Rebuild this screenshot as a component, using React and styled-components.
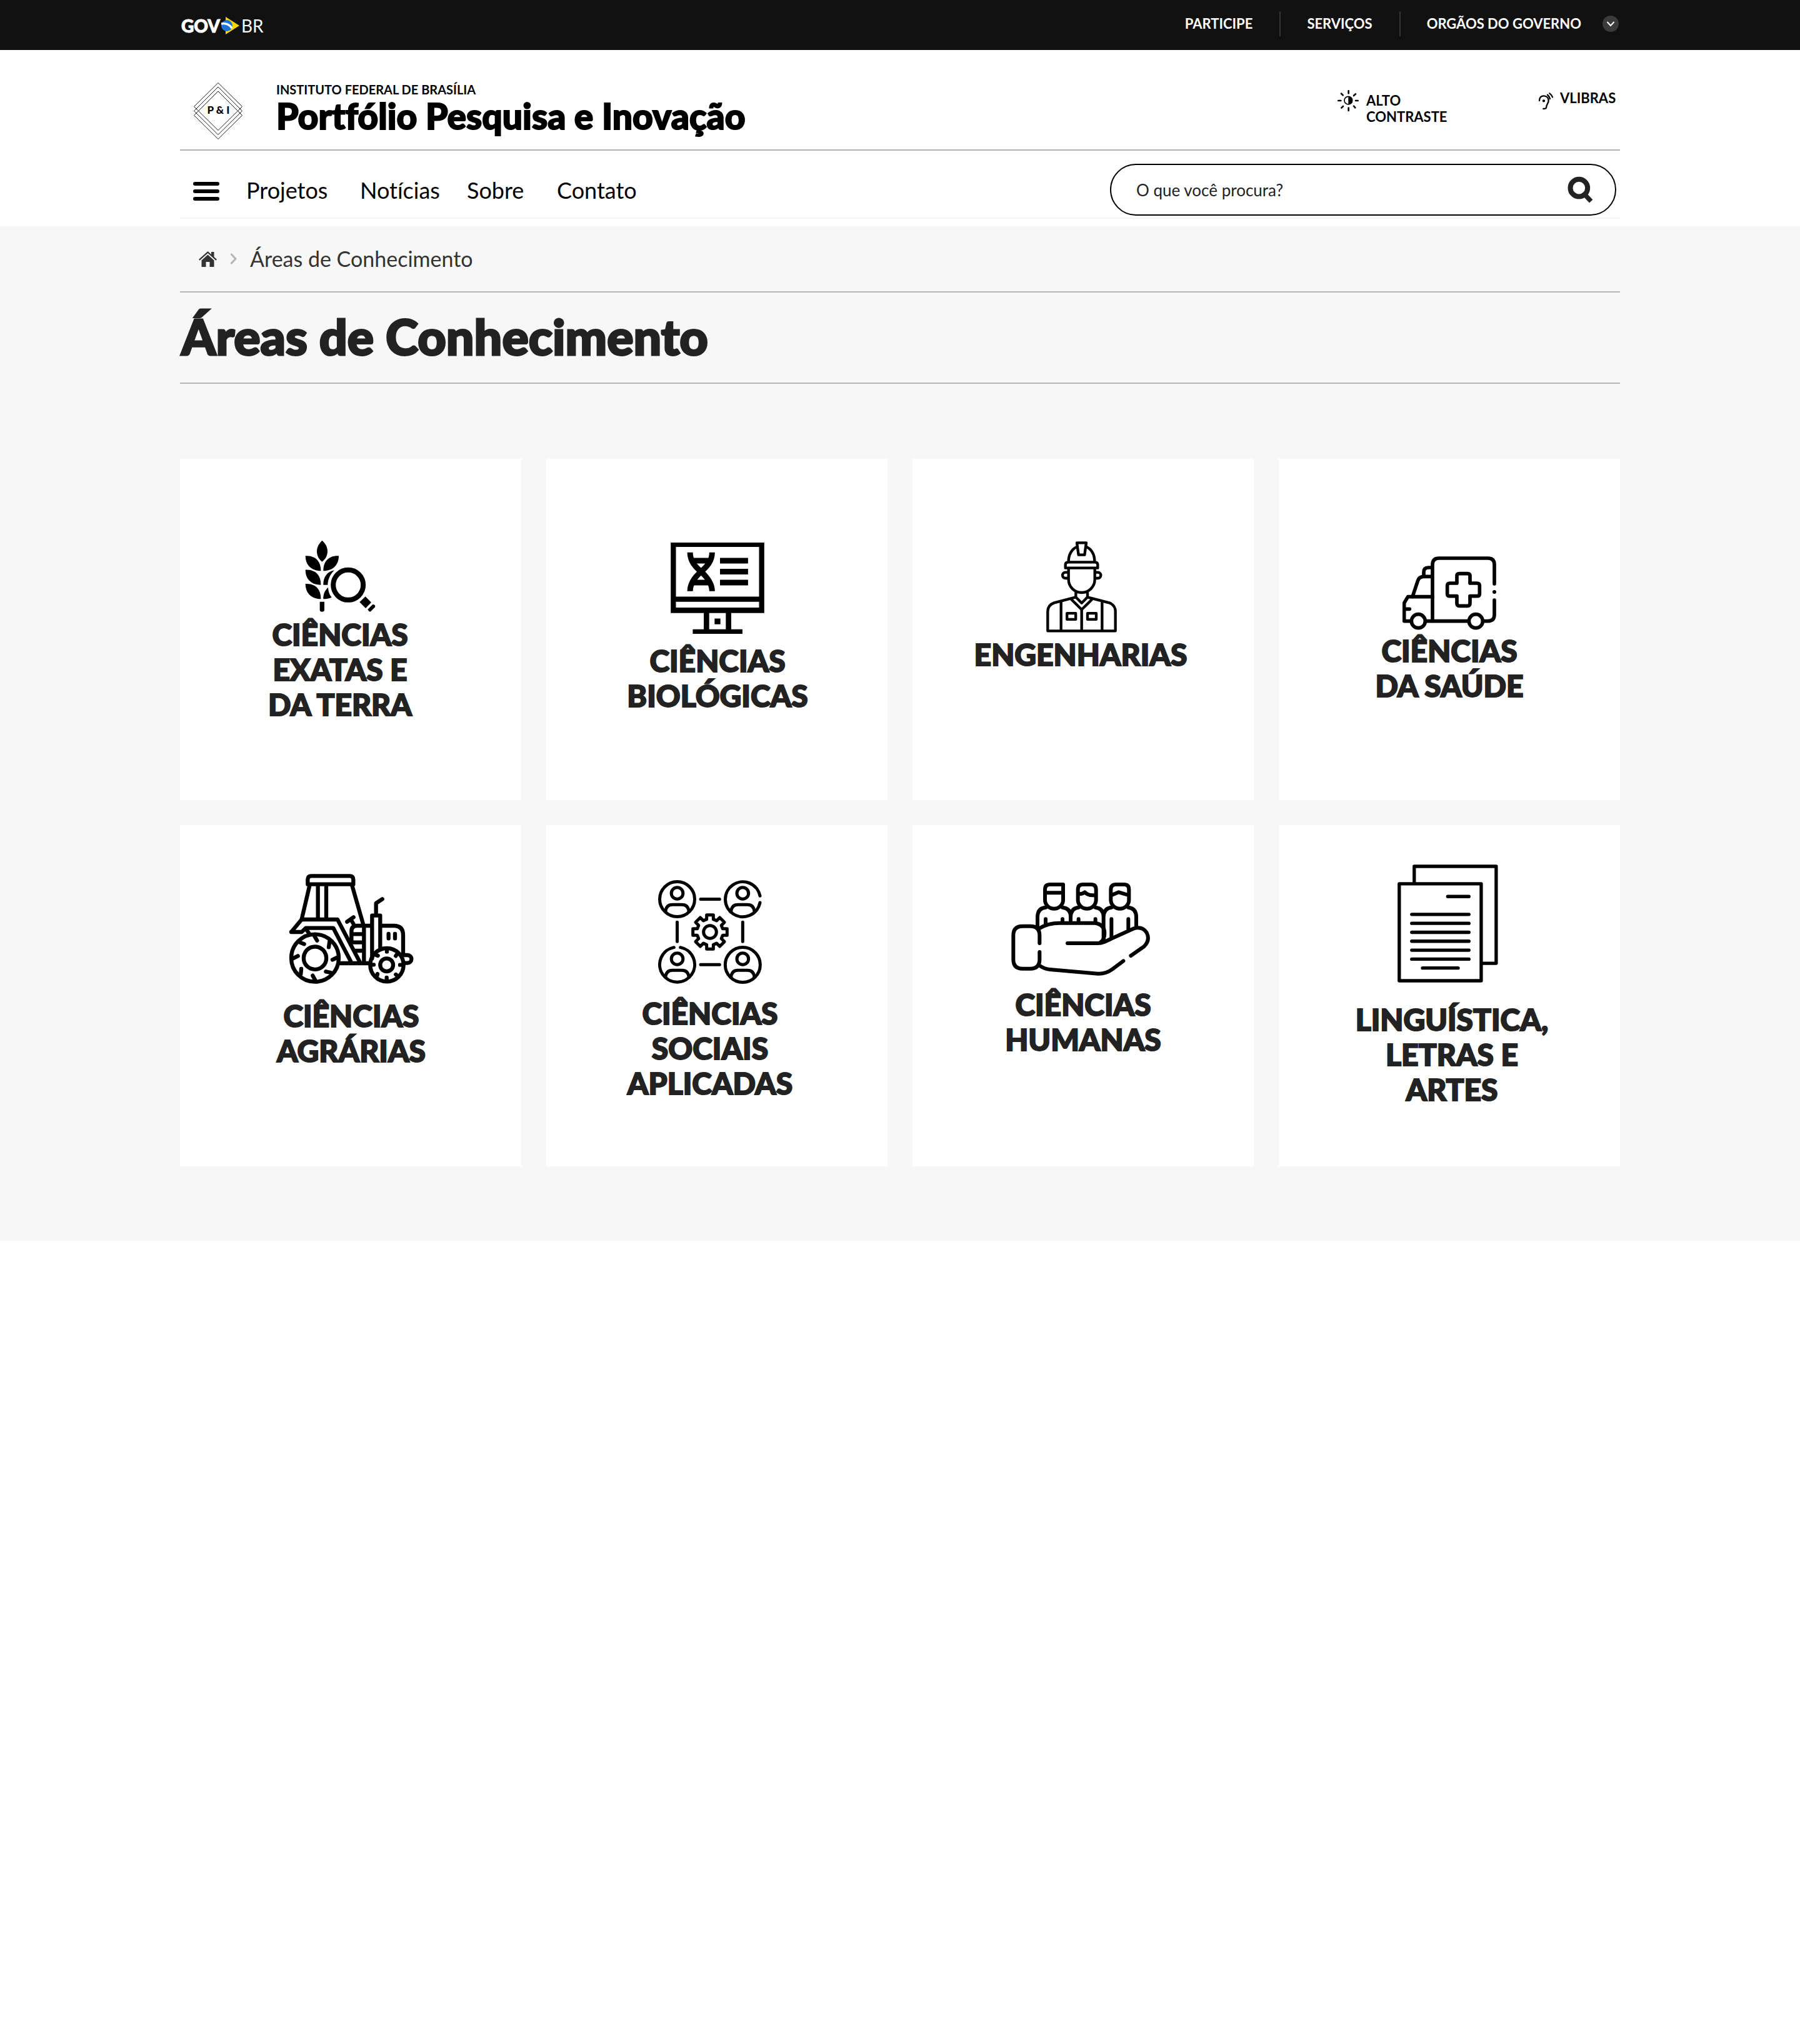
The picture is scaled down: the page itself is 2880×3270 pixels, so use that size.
import React from "react";
import styled, { createGlobalStyle } from "styled-components";

const font = `Lato, "Open Sans", sans-serif`;
const ink = "#222222";
const rule = "#b3b3b3";

const GlobalStyle = createGlobalStyle`
  *, *::before, *::after { box-sizing: border-box; }
  body {
    margin: 0;
    background: #ffffff;
    color: #000000;
    font-family: ${font};
    font-variant-ligatures: none;
    -webkit-font-smoothing: antialiased;
  }
  a { color: inherit; text-decoration: none; }
  ul, ol { list-style: none; margin: 0; padding: 0; }
  h1, h2, p { margin: 0; }
  svg { display: block; flex: none; }
`;

const Container = styled.div`
  width: 80%;
  margin: 0 auto;
`;

/* ---------- government bar ---------- */

const GovBar = styled.div`
  background: #111111;
  color: #ffffff;
`;

const GovRow = styled(Container)`
  display: flex;
  align-items: center;
  justify-content: space-between;
  height: 80px;
  padding: 0 2px;
`;

const GovLogo = styled.a`
  display: flex;
  align-items: center;
  gap: 2px;
  padding-top: 2px;
  font-size: 28px;
  line-height: 32px;
`;

const GovStrong = styled.span`
  font-weight: 900;
  -webkit-text-stroke: 1px currentColor;
`;

const GovLight = styled.span`
  font-weight: 400;
`;

const GovNav = styled.ul`
  display: flex;
  align-items: center;
  padding-bottom: 4px;
`;

const GovItem = styled.li`
  display: flex;
  align-items: center;
  height: 40px;
  padding: 0 43px 0 42px;
  border-left: 2px solid #333333;
  font-size: 22px;
  font-weight: 700;
  line-height: 28px;

  &:first-child { border-left: 0; }
  &:last-child { padding-right: 0; gap: 34px; }
`;

const RoundButton = styled.button`
  display: grid;
  place-items: center;
  width: 26px;
  height: 26px;
  padding: 0;
  border: 0;
  border-radius: 50%;
  background: #3b3b3b;
  color: #ffffff;
`;

/* ---------- header ---------- */

const Brand = styled(Container)`
  display: flex;
  align-items: flex-start;
  padding: 50px 4px 25px 22px;
`;

const BrandLink = styled.a`
  display: flex;
  align-items: flex-end;
  gap: 54px;
`;

const LogoBox = styled.span`
  height: 82px;
`;

const BrandText = styled.span`
  display: grid;
`;

const Institute = styled.span`
  font-size: 20px;
  font-weight: 700;
  line-height: 26px;
`;

const SiteName = styled.span`
  font-size: 57px;
  font-weight: 900;
  line-height: 58px;
  -webkit-text-stroke: 2px currentColor;
`;

const Tools = styled.div`
  display: flex;
  margin-left: auto;
  padding-top: 13px;
`;

const Tool = styled.a`
  display: flex;
  align-items: flex-start;
  gap: 11px;
  width: ${(p) => p.$width};
  font-size: 22px;
  font-weight: 700;
  line-height: 26px;
`;

const ToolText = styled.span`
  padding-top: ${(p) => (p.$lines > 1 ? "5px" : "1px")};
  max-width: 132px;
`;

const Rule = styled(Container)`
  height: 2px;
  background: ${rule};
`;

const NavRow = styled(Container)`
  display: flex;
  align-items: center;
  padding: 21px 6px 3px 21px;
  border-bottom: 2px solid #f4f4f4;
`;

const MenuButton = styled.button`
  padding: 4px 0 0;
  border: 0;
  background: none;
`;

const NavLinks = styled.ul`
  display: grid;
  grid-template-columns: 182px 171px 144px auto;
  margin-left: 43px;
  font-size: 36px;
  line-height: 42px;
`;

const SearchForm = styled.form`
  display: flex;
  align-items: center;
  width: 810px;
  height: 83px;
  margin-left: auto;
  padding: 0 35px 0 40px;
  border: 2px solid #000000;
  border-radius: 42px;
`;

const SearchInput = styled.input`
  flex: 1;
  min-width: 0;
  padding: 0;
  border: 0;
  outline: 0;
  background: none;
  color: ${ink};
  font: 400 26px/32px ${font};

  &::placeholder { color: ${ink}; opacity: 1; }
`;

const SearchButton = styled.button`
  padding: 0;
  border: 0;
  background: none;
`;

/* ---------- main ---------- */

const Main = styled.main`
  margin-top: 12px;
  padding-bottom: 119px;
  background: #f7f7f7;
  color: ${ink};
`;

const Crumbs = styled.ol`
  display: flex;
  align-items: center;
  height: 104px;
  padding-left: 30px;
  color: #333333;
  font-size: 34px;
  line-height: 40px;
`;

const Crumb = styled.li`
  display: flex;
  align-items: center;
  gap: 21px;

  & + & { margin-left: 21px; }
`;

const PageTitle = styled.h1`
  padding: 28px 2px 32px;
  font-size: 79px;
  font-weight: 900;
  line-height: 84px;
  -webkit-text-stroke: 3px currentColor;
`;

const AreaGrid = styled(Container).attrs({ as: "ul" })`
  display: grid;
  grid-template-columns: repeat(4, 1fr);
  gap: 40px;
  padding-top: 120px;
`;

const AreaCard = styled.a`
  display: flex;
  flex-direction: column;
  align-items: center;
  gap: ${(p) => p.$gap}px;
  aspect-ratio: 1;
  padding: ${(p) => `${p.$top}px ${p.$right}px 0 ${p.$left}px`};
  background: #ffffff;
`;

const AreaName = styled.h2`
  font-size: 48px;
  font-weight: 900;
  line-height: 56px;
  text-align: center;
  white-space: pre-line;
  -webkit-text-stroke: 2px currentColor;
`;

/* ---------- small drawings ---------- */

const Flag = () => (
  <svg width="30" height="30" viewBox="0 0 30 30" aria-hidden="true">
    <path d="M7 1 L29 15 L7 29Z" fill="#ffd500" />
    <circle cx="9" cy="15" r="9" fill="#1e74d6" />
    <path d="M0 12 Q11 10 17 19" fill="none" stroke="#fff" strokeWidth="3.4" />
  </svg>
);

const ChevronDown = () => (
  <svg width="14" height="10" viewBox="0 0 14 10" fill="none" stroke="currentColor" strokeWidth="2" aria-hidden="true">
    <path d="M1.5 2 L7 8 L12.5 2" />
  </svg>
);

const PortfolioLogo = () => (
  <svg width="78" height="91" viewBox="0 0 78 91" fill="none" stroke="#222" strokeWidth="1" aria-hidden="true">
    <path d="M39 .5 L77.500 38.500 L39 76.500 L.5 38.500Z" />
    <path d="M39 7 L77.500 45.500 L39 83.500 L.5 45.500Z" />
    <path d="M39 14 L77.500 52.500 L39 90.500 L.5 52.500Z" />
    <text x="39.500" y="50" textAnchor="middle" fill="#000" stroke="none" fontSize="17" fontWeight="900" fontFamily="Lato, sans-serif">P &amp; I</text>
  </svg>
);

const ContrastIcon = () => (
  <svg width="36" height="36" viewBox="27 400 108 108" fill="none" stroke="#000" strokeWidth="8" strokeLinecap="round" aria-hidden="true">
    <circle cx="82" cy="453" r="19" strokeWidth="5" />
    <path d="M82 434 A19 19 0 0 1 82 472Z" fill="#000" stroke="none" />
    <path d="M83 407V419M83 489V502M34 454H46M117 454H128M48 420L56 428M108 430L117 422M49 489L57 481M108 480L115 488" />
  </svg>
);

const EarIcon = () => (
  <svg width="24" height="36" viewBox="993 400 72 108" fill="none" stroke="#000" strokeWidth="7" strokeLinecap="round" aria-hidden="true">
    <path d="M999 454 C999 438 1009 431 1020 431 C1034 431 1043 441 1043 454 C1043 468 1032 474 1033 483 C1033 490 1027 493 1018 493" />
    <circle cx="1020" cy="455" r="3" />
    <path d="M1038 426 Q1047 434 1050 445M1048 419 Q1059 427 1062 437" />
  </svg>
);

const MenuIcon = () => (
  <svg width="42" height="30" viewBox="0 0 42 30" aria-hidden="true">
    <rect width="42" height="6" rx="3" />
    <rect y="12" width="42" height="6" rx="3" />
    <rect y="24" width="42" height="6" rx="3" />
  </svg>
);

const SearchIcon = () => (
  <svg width="41" height="43" viewBox="1130 817 123 129" fill="none" stroke={ink} aria-hidden="true">
    <circle cx="1185" cy="873" r="41.500" strokeWidth="24" />
    <path d="M1212 904 L1243 937" strokeWidth="22" />
  </svg>
);

const HomeIcon = () => (
  <svg width="29" height="25" viewBox="0 0 29 25" fill="#333" aria-hidden="true">
    <path d="M4.500 14.500 L14.500 5.500 L24.500 14.500 V25 H17.500 V17 H11.500 V25 H4.500Z" />
    <path d="M14.500 0 L20 5 V1 H24.500 V9 L29 13 L27.500 14.800 L14.500 3 L1.500 14.800 L0 13Z" />
  </svg>
);

const ChevronRight = () => (
  <svg width="11" height="18" viewBox="0 0 11 18" fill="none" stroke="#b5b5b5" strokeWidth="3" aria-hidden="true">
    <path d="M1.500 1 L9 9 L1.500 17" />
  </svg>
);

/* ---------- area drawings ---------- */

const WheatIcon = () => (
  <svg width="113" height="115" viewBox="260 70 339 345" aria-hidden="true">
    <path d="M342 72 C360 88 368 105 368 124 C368 145 358 162 342 174 C326 162 317 145 317 124 C317 105 326 88 342 72Z" />
    <path d="M262 146 C305 143 337 168 336 218 C290 218 262 190 262 146Z" />
    <path d="M262 213 C305 210 337 235 336 285 C290 285 262 257 262 213Z" />
    <path d="M262 280 C305 277 337 302 336 353 C290 353 262 324 262 280Z" />
    <path d="M422 146 C379 143 347 168 348 218 C394 218 422 190 422 146Z" />
    <path d="M401 215 C380 235 370 260 369 285 H348 C347 245 370 220 401 215Z" />
    <path d="M371 297 C372 318 378 332 388 345 C375 351 362 353 348 353 C347 330 355 312 371 297Z" />
    <path d="M331 366 H353 V405 Q353 414 342 414 Q331 414 331 405Z" />
    <circle cx="467.500" cy="285.500" r="72" fill="none" stroke="#000" strokeWidth="24" />
    <path d="M550 341 L578 369 L551 397 L522 368Z" />
    <path d="M561 403 L585 379 Q600 380 596 392 L575 413 Q568 416 561 403Z" />
  </svg>
);

const MonitorIcon = () => (
  <svg width="150" height="146" viewBox="282 84 450 439" aria-hidden="true">
    <path fillRule="evenodd" d="M282 84H732V423H282Z M307 105V344H707V105Z M307 369V397H707V369Z" />
    <path d="M441 420H467V505H441Z M547 420H573V505H547Z M388 501H627V523H388Z M493 449H521V477H493Z" />
    <path d="M519 158H654V185H519Z M519 210H654V237H519Z M519 263H654V290H519Z" />
    <path d="M388 158H470V185H388Z M388 263H470V290H388Z" />
    <path
      d="M375 131 C375 174 400 200 428 224 C455 248 481 278 481 318 M481 131 C481 174 455 200 428 224 C400 248 375 278 375 318"
      fill="none"
      stroke="#000"
      strokeWidth="27"
    />
  </svg>
);

const EngineerIcon = () => (
  <svg width="115" height="146" viewBox="426 78 345 438" fill="none" stroke="#000" strokeWidth="13" strokeLinejoin="round" aria-hidden="true">
    <path d="M579 85H624L616 143H587Z" />
    <path d="M539 174C539 140 556 114 580 104M664 174C664 140 648 114 624 104" />
    <path d="M524 206V190Q524 178 538 178H665Q679 178 679 190V206Z" />
    <path d="M539 208V261A63 63 0 0 0 665 261V208" />
    <path d="M536 227H524A14 14 0 0 0 524 255H536M667 227H680A14 14 0 0 1 680 255H667" />
    <path d="M574 322V346L602 374L630 346V322" />
    <path d="M552 356L602 406L652 356" />
    <path d="M574 346L470 373Q439 384 439 415V508H764V415Q764 384 734 373L630 346" />
    <path d="M503 368V508M700 368V508M602 406V508" />
    <rect x="531.500" y="423.500" width="42" height="29" />
    <rect x="630" y="423.500" width="42" height="29" />
  </svg>
);

const AmbulanceIcon = () => (
  <svg width="150" height="118" viewBox="222 90 450 354" fill="none" stroke="#000" strokeWidth="17" strokeLinecap="round" strokeLinejoin="round" aria-hidden="true">
    <path d="M366 400V130Q366 99 397 99H632Q663 99 663 130V222" />
    <circle cx="663" cy="261" r="9" fill="#000" stroke="none" />
    <path d="M663 300V370Q663 401 632 401H612M260 401H230V314L248 284H366M338 401H536" />
    <path d="M495 173H534Q546 173 546 185V219H580Q592 219 592 231V269Q592 281 580 281H546V316Q546 328 534 328H495Q483 328 483 316V281H449Q437 281 437 269V231Q437 219 449 219H483V185Q483 173 495 173Z" />
    <path d="M362 144H346Q324 144 324 166V186" />
    <path d="M362 187H326Q302 187 296 206L270 284M230 343H256" />
    <circle cx="298" cy="401" r="33" />
    <circle cx="574" cy="401" r="33" />
  </svg>
);

const TractorIcon = () => (
  <svg width="200" height="176" viewBox="126 84 600 528" fill="none" stroke="#000" strokeWidth="19" strokeLinecap="round" strokeLinejoin="round" aria-hidden="true">
    <path d="M217 134V112Q217 94 235 94H418Q436 94 436 112V134Z" />
    <path d="M226 140L188 302M266 140V300M306 140V300M430 140L484 328" />
    <path d="M138 363L188 303H360L466 505M138 363H188L208 344H340L424 505M208 348L222 368M372 513H512" />
    <path d="M406 314L437 292M424 303L440 330" />
    <path d="M427 410V360Q427 333 454 333H522M487 333V505M432 373H480M432 413H480M444 453H480" />
    <path d="M526 490V284H565V440M545 280V225L575 205" />
    <path d="M572 333H630Q675 333 675 378V470M605 372V394M636 372V394" />
    <path d="M680 474H696A19 19 0 0 1 696 512H686" />
    <circle cx="252" cy="488" r="114" />
    <circle cx="252" cy="488" r="54.500" />
    <path d="M248 380L262 404M178 412L200 421M322 408L318 436M358 486L336 496M328 558L304 553M254 596L241 572M184 564L186 540M146 490L170 478" />
    <circle cx="597" cy="521" r="80" />
    <circle cx="596" cy="521" r="31" />
    <path d="M597 448V458M546 474L554 477M526 520H534M550 573L552 564M596 592V582M646 572L640 567M668 521H660M644 472L640 478" />
  </svg>
);

const gearPath = (() => {
  const pts = [];
  for (let i = 0; i < 8; i += 1) {
    const a = (i * Math.PI) / 4;
    [[-16, -61], [-16, -82], [16, -82], [16, -61]].forEach(([x, y]) => {
      pts.push([465 + x * Math.cos(a) - y * Math.sin(a), 333 + x * Math.sin(a) + y * Math.cos(a)]);
    });
  }
  return `M${pts.map(([x, y]) => `${x.toFixed(1)} ${y.toFixed(1)}`).join("L")}Z`;
})();

const NetworkIcon = () => (
  <svg width="166" height="166" viewBox="216 84 498 498" fill="none" stroke="#000" strokeWidth="15" strokeLinecap="round" strokeLinejoin="round" aria-hidden="true">
    <circle cx="307.500" cy="175.500" r="84" />
    <circle cx="622" cy="490.500" r="84" />
    <path d="M705 160A84 84 0 1 0 705 192M292 407A84 84 0 1 0 323 407" />
    {[[307.5, 175], [622, 175], [307.5, 490], [622, 490]].map(([x, y]) => (
      <g key={`${x}-${y}`}>
        <circle cx={x} cy={y - 28} r="28" />
        <path d={`M${x - 56} ${y + 60}Q${x - 53} ${y + 27} ${x - 22} ${y + 27}H${x + 22}Q${x + 53} ${y + 27} ${x + 56} ${y + 60}`} />
      </g>
    ))}
    <path d="M420 175.500H511M420 490H511M307.500 286V379M622 286V379" />
    <circle cx="465" cy="333" r="31" />
    <path d={gearPath} />
  </svg>
);

const PeopleHandIcon = () => (
  <svg width="230" height="149" viewBox="114 97 690 447" fill="none" stroke="#000" strokeWidth="18" strokeLinecap="round" strokeLinejoin="round" aria-hidden="true">
    <path d="M250 388V350Q250 306 206 306H168Q124 306 124 350V466Q124 510 168 510H206Q250 510 250 466V430" />
    <path d="M250 316Q290 291 345 291H515Q562 297 562 340Q562 370 544 382" />
    <path d="M384 388H530Q545 388 560 382L700 318Q742 304 764 337Q782 372 752 403L688 448" />
    <path d="M254 498Q274 512 300 514L530 534Q568 536 600 512L652 473" />
    <path d="M276 180V130Q276 106 300 106H363V180A43.500 42 0 0 1 276 180ZM276 146H363" />
    <path d="M434 180V130Q434 106 458 106H497Q521 106 521 130V180A43.500 42 0 0 1 434 180ZM436 152Q456 153 467 143Q484 162 519 157" />
    <path d="M592 180V130Q592 106 616 106H655Q679 106 679 130V180A43.500 42 0 0 1 592 180ZM596 157L630 143L676 157" />
    <path d="M240 308V260Q242 218 280 216M360 216Q399 220 399 260V284M399 260Q402 218 438 216M518 216Q556 220 557 260V374M557 260Q560 218 596 216M676 216Q713 220 714 260V308" />
    <path d="M279 272V296M360 272V288M437 272V288M518 272V288M595 272V360M676 272V320" />
  </svg>
);

const PagesIcon = () => (
  <svg width="175" height="189" viewBox="287 70 525 568" fill="none" stroke="#000" strokeWidth="16" strokeLinecap="round" strokeLinejoin="round" aria-hidden="true">
    <path d="M367 160V79H761V545H692" />
    <rect x="295" y="163" width="394" height="466" />
    <path d="M528 224H630M355 310H630M355 353H630M355 396H630M355 439H630M355 482H630M355 525H630M407 568H578" />
  </svg>
);

const areas = [
  { name: "CIÊNCIAS\nEXATAS E\nDA TERRA", Icon: WheatIcon, top: 130, gap: 8, right: 34 },
  { name: "CIÊNCIAS\nBIOLÓGICAS", Icon: MonitorIcon, top: 134, gap: 15, left: 2 },
  { name: "ENGENHARIAS", Icon: EngineerIcon, top: 132, gap: 7, right: 8 },
  { name: "CIÊNCIAS\nDA SAÚDE", Icon: AmbulanceIcon, top: 156, gap: 5 },
  { name: "CIÊNCIAS\nAGRÁRIAS", Icon: TractorIcon, top: 78, gap: 23, left: 2 },
  { name: "CIÊNCIAS\nSOCIAIS\nAPLICADAS", Icon: NetworkIcon, top: 88, gap: 19, right: 22 },
  { name: "CIÊNCIAS\nHUMANAS", Icon: PeopleHandIcon, top: 92, gap: 18 },
  { name: "LINGUÍSTICA,\nLETRAS E\nARTES", Icon: PagesIcon, top: 63, gap: 31, left: 8 },
];

export default function App() {
  return (
    <>
      <GlobalStyle />
      <GovBar>
        <GovRow>
          <GovLogo href="#gov">
            <GovStrong>GOV</GovStrong>
            <Flag />
            <GovLight>BR</GovLight>
          </GovLogo>
          <GovNav>
            <GovItem><a href="#participe">PARTICIPE</a></GovItem>
            <GovItem><a href="#servicos">SERVIÇOS</a></GovItem>
            <GovItem>
              <a href="#orgaos">ORGÃOS DO GOVERNO</a>
              <RoundButton type="button" aria-label="Abrir órgãos do governo"><ChevronDown /></RoundButton>
            </GovItem>
          </GovNav>
        </GovRow>
      </GovBar>

      <header>
        <Brand>
          <BrandLink href="#inicio">
            <LogoBox><PortfolioLogo /></LogoBox>
            <BrandText>
              <Institute>INSTITUTO FEDERAL DE BRASÍLIA</Institute>
              <SiteName>Portfólio Pesquisa e Inovação</SiteName>
            </BrandText>
          </BrandLink>
          <Tools>
            <Tool href="#contraste" $width="322px">
              <ContrastIcon />
              <ToolText $lines={2}>ALTO CONTRASTE</ToolText>
            </Tool>
            <Tool href="#vlibras" $width="127px">
              <EarIcon />
              <ToolText $lines={1}>VLIBRAS</ToolText>
            </Tool>
          </Tools>
        </Brand>
        <Rule />
        <NavRow>
          <MenuButton type="button" aria-label="Menu"><MenuIcon /></MenuButton>
          <nav>
            <NavLinks>
              <li><a href="#projetos">Projetos</a></li>
              <li><a href="#noticias">Notícias</a></li>
              <li><a href="#sobre">Sobre</a></li>
              <li><a href="#contato">Contato</a></li>
            </NavLinks>
          </nav>
          <SearchForm role="search">
            <SearchInput type="search" aria-label="Buscar" placeholder="O que você procura?" />
            <SearchButton type="button" aria-label="Pesquisar"><SearchIcon /></SearchButton>
          </SearchForm>
        </NavRow>
      </header>

      <Main>
        <Container>
          <Crumbs>
            <Crumb>
              <a href="#inicio" aria-label="Início"><HomeIcon /></a>
              <ChevronRight />
            </Crumb>
            <Crumb>Áreas de Conhecimento</Crumb>
          </Crumbs>
        </Container>
        <Rule />
        <Container>
          <PageTitle>Áreas de Conhecimento</PageTitle>
        </Container>
        <Rule />
        <AreaGrid>
          {areas.map(({ name, Icon, top, gap, left = 0, right = 0 }) => (
            <li key={name}>
              <AreaCard href="#area" $top={top} $gap={gap} $left={left} $right={right}>
                <Icon />
                <AreaName>{name}</AreaName>
              </AreaCard>
            </li>
          ))}
        </AreaGrid>
      </Main>
    </>
  );
}
